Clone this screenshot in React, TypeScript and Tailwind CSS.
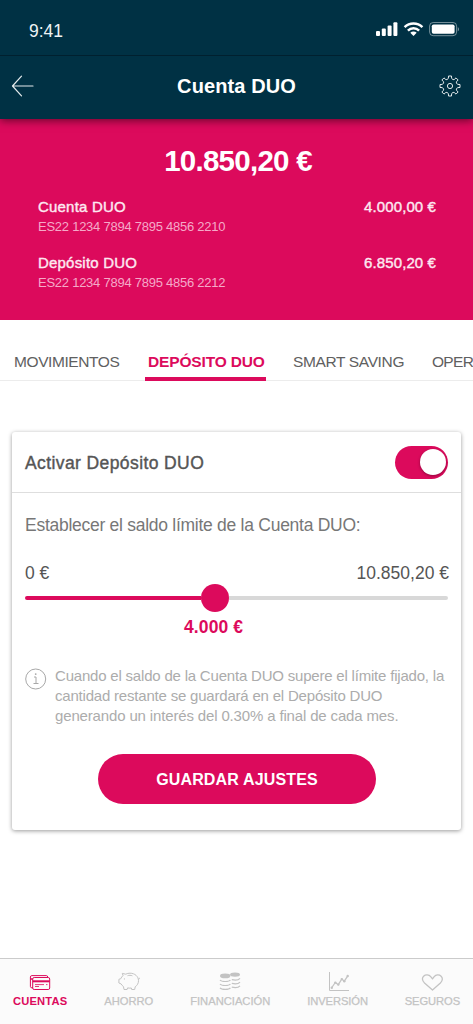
import React from "react";

const accounts = [
  { name: "Cuenta DUO", iban: "ES22 1234 7894 7895 4856 2210", amount: "4.000,00 €" },
  { name: "Depósito DUO", iban: "ES22 1234 7894 7895 4856 2212", amount: "6.850,20 €" },
];

function StatusBar() {
  return (
    <div className="flex h-[56px] items-start justify-between border-b border-[#00202f] pl-[29px] pr-[12px] pt-[20px]">
      <span className="text-[17.5px] leading-[22px] text-[#eef3f5]">9:41</span>
      <svg width="86" height="18" viewBox="0 0 86 18" fill="#fff">
        <rect x="1" y="11" width="4" height="5" rx="1" />
        <rect x="6.8" y="8.5" width="4" height="7.5" rx="1" />
        <rect x="12.6" y="5.5" width="4" height="10.5" rx="1" />
        <rect x="18.4" y="2.2" width="4" height="13.8" rx="1" />
        <g fill="none" stroke="#fff" strokeWidth="2.5">
          <path d="M29.6 7.2a12.6 12.6 0 0 1 17.8 0" />
          <path d="M32.9 10.6a8 8 0 0 1 11.2 0" />
        </g>
        <path d="M35.3 12.7a4.6 4.6 0 0 1 6.4 0L38.5 16z" />
        <rect x="54.6" y="2.5" width="27" height="13.2" rx="3.6" fill="none" stroke="#fff" strokeOpacity="0.45" />
        <rect x="56.8" y="4.5" width="22.8" height="9.3" rx="1.8" />
        <path d="M82.8 6.9c1.6.7 1.6 3.7 0 4.4z" fillOpacity="0.5" />
      </svg>
    </div>
  );
}

function GearIcon() {
  return (
    <svg width="22" height="22" viewBox="0 0 22 22" fill="none" stroke="#e3eaec" strokeWidth="1" strokeLinejoin="round">
      <path d="M9.4 3.4 9.5 1h3l.1 2.400Q14.200 5.300 15.240 4.500L17.010 2.870 19.130 4.990 17.500 6.760Q16.700 7.800 18.600 9.400L21 9.500v3L18.600 12.600Q16.700 14.200 17.500 15.240L19.130 17.010 17.010 19.130 15.240 17.500Q14.200 16.700 12.600 18.600L12.500 21h-3L9.400 18.600Q7.800 16.700 6.760 17.500L4.990 19.130 2.870 17.010 4.500 15.240Q5.300 14.200 3.400 12.600L1 12.500v-3L3.400 9.400Q5.300 7.800 4.500 6.760L2.870 4.990 4.990 2.870 6.760 4.500Q7.800 5.300 9.400 3.400z" />
      <circle cx="11" cy="11" r="2.6" />
    </svg>
  );
}

function Header() {
  return (
    <div className="flex h-[63px] items-center justify-between pb-[3px] pl-[11px] pr-[12px]">
      <svg width="23" height="22" viewBox="0 0 23 22" fill="none" stroke="#e3eaec" strokeWidth="1.2" strokeLinecap="round" strokeLinejoin="round">
        <path d="M22 11H1.500M10.500 1.200 1.500 11l9 9.800" />
      </svg>
      <h1 className="text-[20px] font-bold leading-[24px] tracking-[0.1px] text-white">Cuenta DUO</h1>
      <GearIcon />
    </div>
  );
}

function Balance() {
  return (
    <div className="h-[201px] bg-[#dc0a5c] pl-[38px] pr-[37px] pt-[25px]">
      <div className="pl-[2px] text-center text-[29.5px] font-bold leading-[34px] tracking-[-0.75px] text-white">10.850,20 €</div>
      <div className="mt-[18px] flex flex-col gap-[15px]">
        {accounts.map((a) => (
          <div key={a.iban} className="flex h-[41px] justify-between text-[#fde9f1]">
            <div>
              <div className="pt-px text-[15px] leading-[19px] tracking-[0.2px] [-webkit-text-stroke:0.4px]">{a.name}</div>
              <div className="pt-px text-[13px] leading-[20px] tracking-[-0.25px] text-[#f5a9c8]">{a.iban}</div>
            </div>
            <div className="pt-px text-[15px] leading-[19px] tracking-[0.1px] [-webkit-text-stroke:0.4px]">{a.amount}</div>
          </div>
        ))}
      </div>
    </div>
  );
}

function Tabs() {
  return (
    <div className="flex h-[61px] items-end whitespace-nowrap border-b border-[#ececec] pl-[14px] text-[15.5px] leading-[20px] tracking-[-0.42px] text-[#606060]">
      <div className="w-[131px] shrink-0 pb-[8px]">MOVIMIENTOS</div>
      <div className="-mb-px h-[30px] w-[121px] shrink-0 border-b-4 border-[#dc0a5c] pl-[3px] pt-px font-bold tracking-[-0.15px] text-[#dc0a5c]">
        DEPÓSITO DUO
      </div>
      <div className="ml-[27px] w-[139px] shrink-0 pb-[8px] tracking-[-0.36px]">SMART SAVING</div>
      <div className="shrink-0 pb-[8px] tracking-[-0.7px]">OPER</div>
    </div>
  );
}

function Settings() {
  return (
    <div className="mx-[12px] mt-[51px] h-[398px] rounded-[3px] bg-white text-[17.5px] text-[#555] shadow-[0_1px_4px_rgba(0,0,0,0.4)]">
      <div className="flex h-[61px] items-center justify-between border-b border-[#dedede] pl-[13px] pr-[13px]">
        <span className="pt-[2px] tracking-[0.4px] [-webkit-text-stroke:0.4px]">Activar Depósito DUO</span>
        <div className="flex h-[33px] w-[53px] items-center justify-end rounded-full bg-[#dc0a5c] pr-[2px]">
          <div className="h-[26px] w-[26px] rounded-full bg-white shadow-[0_1px_3px_rgba(0,0,0,0.35)]" />
        </div>
      </div>

      <div className="px-[13px]">
        <div className="mt-[20px] leading-[24px] tracking-[-0.27px] text-[#777]">
          Establecer el saldo límite de la Cuenta DUO:
        </div>
        <div className="-mr-[1px] mt-[24px] flex justify-between leading-[24px]">
          <span>0 €</span>
          <span>10.850,20 €</span>
        </div>
        <div className="mt-[-1px] flex h-[28px] items-center">
          <div className="h-[4px] w-[176px] rounded-l-full bg-[#dc0a5c]" />
          <div className="h-[28px] w-[28px] rounded-full bg-[#dc0a5c]" />
          <div className="h-[4px] flex-1 rounded-r-full bg-[#d8d8d8]" />
        </div>
        <div className="ml-[159px] mt-[4px] font-bold leading-[22px] tracking-[0.1px] text-[#dc0a5c]">4.000 €</div>

        <div className="mt-[28px] flex">
          <svg className="mt-[2px] shrink-0" width="22" height="22" viewBox="0 0 22 22" fill="none" stroke="#a8a8a8">
            <circle cx="10.7" cy="11" r="10" />
            <path d="M9 9h2v6.500M8.500 15.500h5" />
            <circle cx="10.700" cy="6.100" r="0.900" fill="#a8a8a8" stroke="none" />
          </svg>
          <p className="ml-[8px] whitespace-nowrap text-[15px] leading-[20px] tracking-[-0.2px] text-[#acacac]">
            Cuando el saldo de la Cuenta DUO supere el límite fijado, la
            <br />
            cantidad restante se guardará en el Depósito DUO
            <br />
            <span className="tracking-[-0.15px]">generando un interés del 0.30% a final de cada mes.</span>
          </p>
        </div>

        <button className="ml-[73px] mt-[28px] block h-[50px] w-[278px] rounded-full bg-[#dc0a5c] pt-[2px] text-[16px] font-bold tracking-[0.15px] text-white">
          GUARDAR AJUSTES
        </button>
      </div>
    </div>
  );
}

function BottomNav() {
  return (
    <div className="flex h-[66px] justify-between border-t border-[#cbcbcb] bg-[#fbfbfb] px-[13px] pt-[13px] text-[11.2px] leading-[14px] text-[#c3c3c3] [-webkit-text-stroke:0.25px]">
      <div className="flex flex-col items-center gap-[2px] font-bold tracking-[0.15px] text-[#dc0a5c] [-webkit-text-stroke:0px]">
        <svg width="22" height="20" viewBox="0 0 22 20" fill="none" stroke="currentColor">
          <path d="M4 15.800H2.800c-.9 0-1.400-.6-1.400-1.400V5c0-.9.600-1.400 1.400-1.400h14.500c.9 0 1.400.5 1.400 1.400" />
          <rect x="3.700" y="5.500" width="17" height="12" rx="1.500" />
          <path d="M3.700 9.300h17" strokeWidth="2" />
          <path d="M1.400 7h2.300" strokeWidth="1.500" />
          <path d="M6 12.600h9M17 12.600h1.500M6 14.500h4" strokeWidth="0.800" />
        </svg>
        <span>CUENTAS</span>
      </div>
      <div className="flex flex-col items-center gap-[2px]">
        <svg width="22" height="20" viewBox="0 0 22 20" fill="none" stroke="currentColor" strokeLinejoin="round">
          <path d="M5 3.600 4.300 1.400l3.400.8C9 1.500 10.500 1.200 12 1.200c4.900 0 8.500 3.300 8.500 7.500 0 2.600-1.300 4.800-3.300 6.100l-.5 2.700h-3l-.4-1.500c-1.300.2-2.500.2-3.700-.1l-.5 1.600H6l-.5-2.900c-1-.7-1.900-1.600-2.400-2.700L.9 11V7.300l1.900-.6c.4-1.200 1.200-2.200 2.200-3.100z" />
          <path d="M9.500 3.700c1.600-.5 3.300-.5 4.900.1M20.200 7.300c1 0 1.500-.6 1.200-1.500" />
          <circle cx="6.400" cy="6.900" r="0.600" fill="currentColor" stroke="none" />
        </svg>
        <span>AHORRO</span>
      </div>
      <div className="flex flex-col items-center gap-[2px]">
        <svg width="22" height="20" viewBox="0 0 22 20" fill="none" stroke="currentColor" strokeWidth="1.200">
          <ellipse cx="6.200" cy="3.900" rx="5.200" ry="2.300" fill="currentColor" stroke="none" />
          <ellipse cx="16" cy="2.600" rx="5" ry="2.200" fill="currentColor" stroke="none" />
          <path d="M1 8c1.500 2 8.900 2 10.400 0M1 12c1.500 2 8.900 2 10.400 0M1 15.900c1.500 2 8.900 2 10.400 0" />
          <path d="M12.800 7.600c2.700.6 6.800.3 8.200-1.300M12.800 11.400c2.700.6 6.800.3 8.200-1.300M12.800 15.200c2.700.6 6.800.3 8.200-1.300" />
        </svg>
        <span>FINANCIACIÓN</span>
      </div>
      <div className="flex flex-col items-center gap-[2px]">
        <svg width="22" height="20" viewBox="0 0 22 20" fill="none" stroke="currentColor" strokeLinejoin="round">
          <path d="M2.500 0v18.500H22" />
          <path d="M4.500 16 8.300 10.500l3 2.200 3.500-5.700 2.500 2.200L20.800 3.800" strokeWidth="1.300" />
          <g fill="currentColor" stroke="none">
            <circle cx="4.800" cy="15.800" r="1.200" />
            <circle cx="8.300" cy="10.600" r="1.200" />
            <circle cx="11.300" cy="12.600" r="1.200" />
            <circle cx="14.800" cy="7.100" r="1.200" />
            <circle cx="17.300" cy="9.200" r="1.200" />
            <circle cx="20.700" cy="4" r="1.200" />
          </g>
        </svg>
        <span className="tracking-[-0.1px]">INVERSIÓN</span>
      </div>
      <div className="flex flex-col items-center gap-[2px]">
        <svg width="22" height="20" viewBox="0 0 22 20" fill="none" stroke="currentColor" strokeWidth="1.300" strokeLinejoin="round">
          <path d="M11.500 18 3.500 11C1 8.600.9 5.800 2.600 4.200c2-1.900 5.400-1.600 7.100.5L11.500 6.900l1.700-2.200c1.700-2.100 4.900-2.400 6.900-.5 1.700 1.600 1.800 4.400-.7 6.800z" />
        </svg>
        <span className="tracking-[-0.1px]">SEGUROS</span>
      </div>
    </div>
  );
}

export default function App() {
  return (
    <div className="flex h-[1024px] w-[473px] flex-col overflow-hidden bg-white font-['Liberation_Sans',Arial,sans-serif]">
      <div className="relative z-10 bg-[#003144] shadow-[0_2px_8px_rgba(0,0,0,0.5)]">
        <StatusBar />
        <Header />
      </div>
      <Balance />
      <Tabs />
      <div className="flex-1">
        <Settings />
      </div>
      <BottomNav />
    </div>
  );
}
